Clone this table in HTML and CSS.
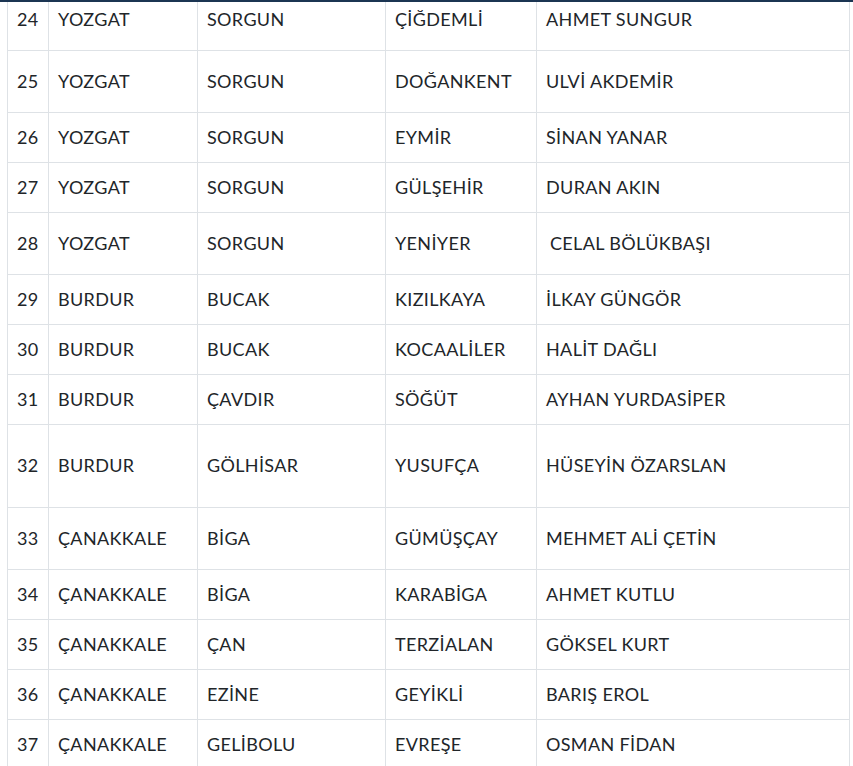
FILE: index.html
```html
<!DOCTYPE html>
<html lang="tr">
<head>
<meta charset="utf-8">
<title>Liste</title>
<link rel="stylesheet" href="styles.css">
</head>
<body>
<div class="topbar"></div>
<div class="wrap">
<table class="list">
<colgroup>
<col class="c-no"><col class="c-il"><col class="c-ilce"><col class="c-koy"><col class="c-ad">
</colgroup>
<tbody>
<tr class="h62"><td>24</td><td>YOZGAT</td><td>SORGUN</td><td>ÇİĞDEMLİ</td><td>AHMET SUNGUR</td></tr>
<tr class="h62"><td>25</td><td>YOZGAT</td><td>SORGUN</td><td>DOĞANKENT</td><td>ULVİ AKDEMİR</td></tr>
<tr class="h50"><td>26</td><td>YOZGAT</td><td>SORGUN</td><td>EYMİR</td><td>SİNAN YANAR</td></tr>
<tr class="h50"><td>27</td><td>YOZGAT</td><td>SORGUN</td><td>GÜLŞEHİR</td><td>DURAN AKIN</td></tr>
<tr class="h62"><td>28</td><td>YOZGAT</td><td>SORGUN</td><td>YENİYER</td><td class="lead">CELAL BÖLÜKBAŞI</td></tr>
<tr class="h50"><td>29</td><td>BURDUR</td><td>BUCAK</td><td>KIZILKAYA</td><td>İLKAY GÜNGÖR</td></tr>
<tr class="h50"><td>30</td><td>BURDUR</td><td>BUCAK</td><td>KOCAALİLER</td><td>HALİT DAĞLI</td></tr>
<tr class="h50"><td>31</td><td>BURDUR</td><td>ÇAVDIR</td><td>SÖĞÜT</td><td>AYHAN YURDASİPER</td></tr>
<tr class="h83"><td>32</td><td>BURDUR</td><td>GÖLHİSAR</td><td>YUSUFÇA</td><td>HÜSEYİN ÖZARSLAN</td></tr>
<tr class="h62"><td>33</td><td>ÇANAKKALE</td><td>BİGA</td><td>GÜMÜŞÇAY</td><td>MEHMET ALİ ÇETİN</td></tr>
<tr class="h50"><td>34</td><td>ÇANAKKALE</td><td>BİGA</td><td>KARABİGA</td><td>AHMET KUTLU</td></tr>
<tr class="h50"><td>35</td><td>ÇANAKKALE</td><td>ÇAN</td><td>TERZİALAN</td><td>GÖKSEL KURT</td></tr>
<tr class="h50"><td>36</td><td>ÇANAKKALE</td><td>EZİNE</td><td>GEYİKLİ</td><td>BARIŞ EROL</td></tr>
<tr class="h50"><td>37</td><td>ÇANAKKALE</td><td>GELİBOLU</td><td>EVREŞE</td><td>OSMAN FİDAN</td></tr>
</tbody>
</table>
</div>
</body>
</html>
```
FILE: styles.css
```css
html, body {
  margin: 0;
  padding: 0;
  background: #ffffff;
  overflow: hidden;
}
body {
  font-family: Lato, "Open Sans", "Liberation Sans", sans-serif;
  font-size: 18px;
  letter-spacing: 0.35px;
  color: #212529;
}
.topbar {
  position: fixed;
  top: 0;
  left: 0;
  right: 0;
  height: 2px;
  background: #1b3552;
  z-index: 2;
}
.wrap {
  padding-left: 7px;
  margin-top: -12px;
}
.list {
  border-collapse: collapse;
  table-layout: fixed;
  width: 842px;
}
.c-no { width: 41px; }
.c-il { width: 149px; }
.c-ilce { width: 188px; }
.c-koy { width: 151px; }
.c-ad { width: 313px; }
.list td {
  border: 1px solid #dee2e6;
  padding: 0 9px;
  vertical-align: middle;
  white-space: nowrap;
  line-height: 1.2;
}
.list td.lead { padding-left: 13px; }
.h50 td { height: 49px; }
.h62 td { height: 61px; }
.h83 td { height: 82px; }
```
